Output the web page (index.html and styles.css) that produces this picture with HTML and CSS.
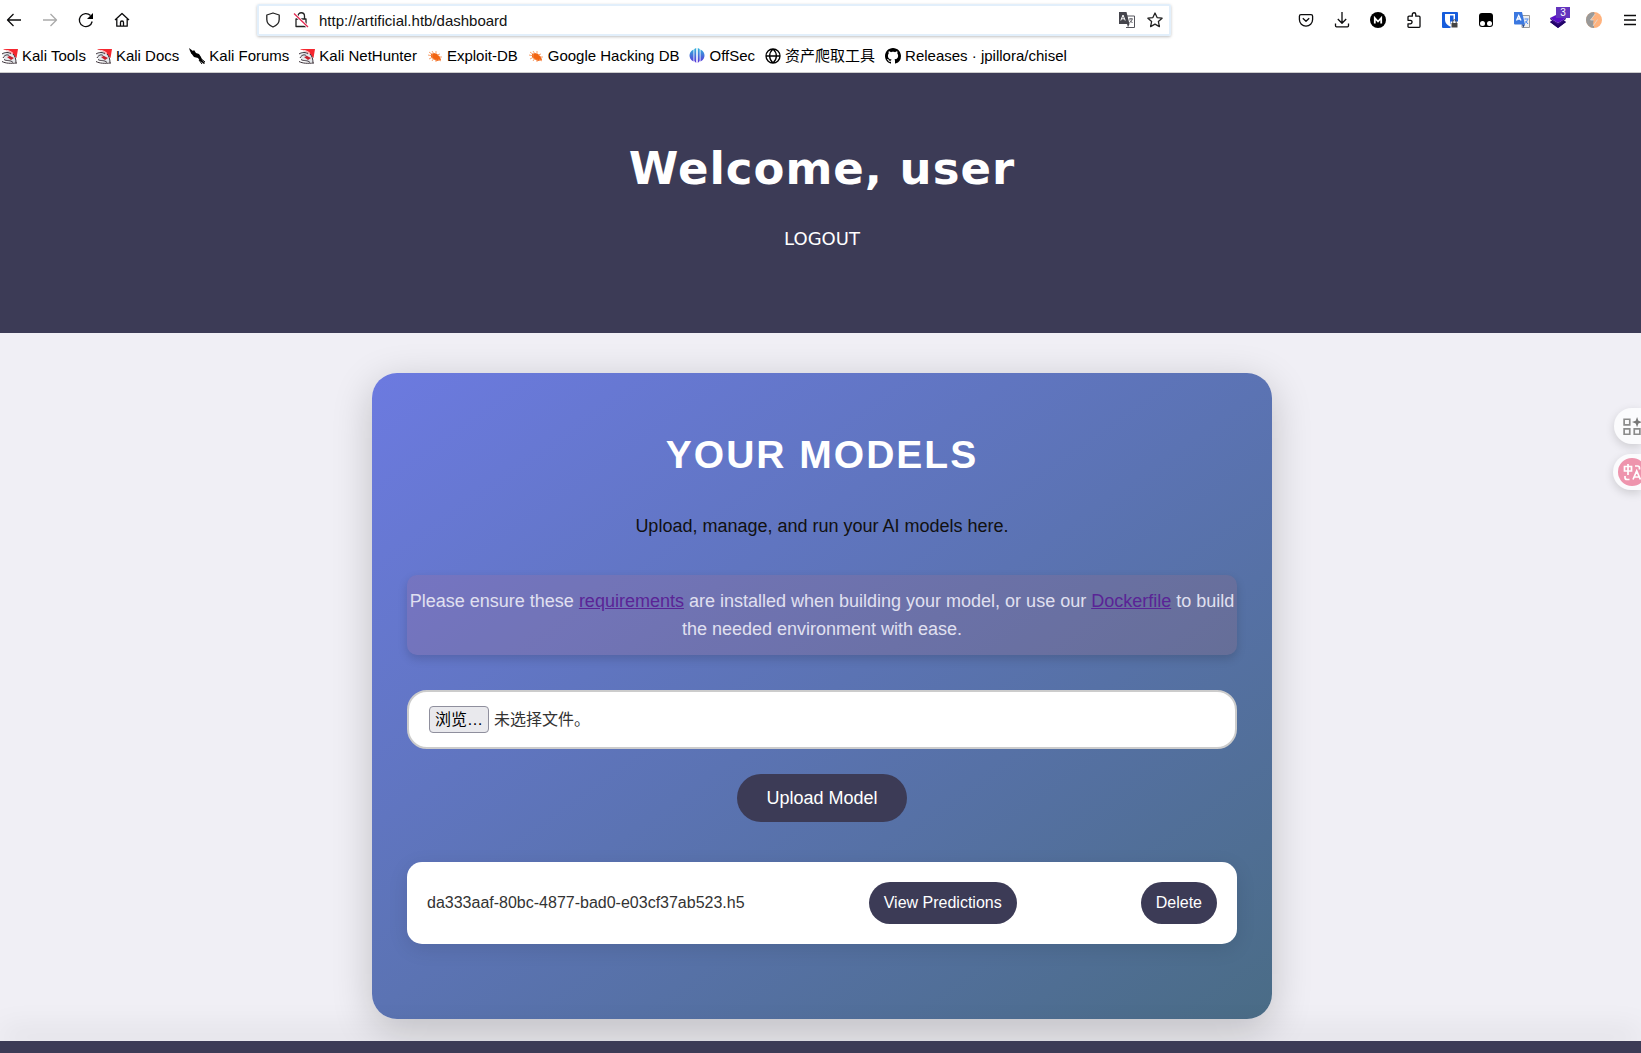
FILE: index.html
```html
<!DOCTYPE html>
<html lang="en">
<head>
<meta charset="utf-8">
<title>Dashboard</title>
<link rel="stylesheet" href="styles.css">
</head>
<body>
<svg class="defs" aria-hidden="true">
  <symbol id="kali" viewBox="0 0 16 16">
    <path d="M1 1h15l-1.500 9-3-3z" fill="#f5272f"/>
    <path d="M1 5l5-2 6 4 2 7-6 0-6-3z" fill="#e4e8ec"/>
    <path d="M0 2.500c4-.5 8 0 11 3" fill="none" stroke="#fff" stroke-width="1"/>
    <path d="M0 6c3-2 7-2 9 0M1 10c2-4 6-4 7-1M2 11.500c3 2 6 0 9 3M0 13.500c4 2 8 2 15 1.500M11 6c2 2 3 5 3 9" fill="none" stroke="#3a3038" stroke-width="1"/>
    <path d="M5 9l3-1 4 2-3 2z" fill="#c5202d"/>
  </symbol>
  <symbol id="spider" viewBox="0 0 16 16">
    <path d="M4 6l3-1 3 1 3 3 1 3-4 1-4-2-2-2z" fill="#f26411"/>
    <path d="M2 4l4 3M5 3l2 3M9 3l0 3M1 7l5 1M2 11l4-2M5 13l2-3M9 14l0-3M13 6l-3 1M15 9l-3 0M14 13l-3-2" fill="none" stroke="#f58a4b" stroke-width=".8"/>
  </symbol>
</svg>

<div class="chrome">
  <div class="toolbar">
    <nav class="nav-group">
      <button class="tool" aria-label="Back"><svg viewBox="0 0 16 16"><path d="M15 8H1.500M7.500 2L1.500 8l6 6" class="ln"/></svg></button>
      <button class="tool faded" aria-label="Forward"><svg viewBox="0 0 16 16"><path d="M1 8h13.500M8.500 2l6 6-6 6" class="ln"/></svg></button>
      <button class="tool" aria-label="Reload"><svg viewBox="0 0 16 16"><path d="M14.200 9.500A6.500 6.500 0 1 1 12.500 3.500" class="ln"/><path d="M15 1v6H9z"/></svg></button>
      <button class="tool" aria-label="Home"><svg viewBox="0 0 16 16"><path d="M1 8l7-6.500L15 8M2.800 7v7.200h10.400V7M6.500 14v-3.500a1.500 1.500 0 0 1 3 0V14" class="ln"/></svg></button>
    </nav>
    <div class="urlbar">
      <svg class="ico" viewBox="0 0 16 16"><path d="M8 1L14.200 3v4.500c0 3-2.500 6-6.200 7.500C4.300 13.500 1.800 10.500 1.800 7.500V3z" class="ln"/></svg>
      <svg class="ico lock" viewBox="0 0 16 16"><path d="M5 7V4a3 3 0 0 1 6.500 0v3M3 7h10v7.500H3z" class="ln"/><path d="M1 1.500L15 15" stroke="#fff" stroke-width="3"/><path d="M1 1.500L15 15" stroke="#e22850" stroke-width="1.300"/></svg>
      <input class="url" type="text" aria-label="Address" value="http://artificial.htb/dashboard">
      <svg class="ico" viewBox="0 0 16 16"><path d="M8 4h7.500v11.500H7" fill="none" stroke="#55555c"/><path d="M0 0h7.500l3 12H0z" fill="#45454c"/><path d="M1.800 8.500L4 3l2.200 5.500M2.700 6.800h2.600" fill="none" stroke="#fff"/><path d="M10 7h4M12 6v1M13 7.500c-.5 2-1.500 2.500-2.500 3M11 8.500l2.500 2.500" fill="none" stroke="#55555c"/><path d="M8 12l2.500 0L9 15.500z" fill="#45454c"/></svg>
      <svg class="ico star" viewBox="0 0 16 16"><path d="M8 1l2.100 4.600 5 .6-3.700 3.400 1 5L8 12.100l-4.400 2.500 1-5L.9 6.200l5-.6z" class="ln"/></svg>
    </div>
    <div class="ext-group">
      <button class="tool" aria-label="Pocket"><svg viewBox="0 0 16 16"><path d="M3 2.700h10a1.600 1.600 0 0 1 1.600 1.600V7.500a6.600 6.600 0 0 1-13.200 0V4.300A1.600 1.600 0 0 1 3 2.700zM4.800 6.300L8 9.300l3.200-3" class="ln"/></svg></button>
      <button class="tool" aria-label="Downloads"><svg viewBox="0 0 16 16"><path d="M8 0v11M3.800 7L8 11.200 12.200 7M1.500 11.500v2.300a1 1 0 0 0 1 1h11a1 1 0 0 0 1-1v-2.300" class="ln"/></svg></button>
      <button class="tool" aria-label="M"><svg viewBox="0 0 16 16"><circle cx="8" cy="8" r="8"/><path d="M4.800 11.500V6L8 9.500 11.200 6v5.500" fill="none" stroke="#fff" stroke-width="1.800"/></svg></button>
      <button class="tool" aria-label="Extensions"><svg viewBox="0 0 16 16"><path d="M2 5.200a1 1 0 0 1 1-1h3.300V2.500a1.700 1.700 0 0 1 3.500 0v1.700h3.200a1 1 0 0 1 1 1v9.300a.8.800 0 0 1-.8.8H2.800a.8.800 0 0 1-.8-.8v-2.700h2.300a1.700 1.700 0 0 0 0-3.500H2z" class="ln"/></svg></button>
      <button class="tool" aria-label="Password manager"><svg viewBox="0 0 16 16"><rect width="16" height="16" rx="1" fill="#175ddc"/><path d="M3 2h10v6c0 3-2 5-5 6.500C5 13 3 11 3 8z" fill="#fff"/><path d="M8 3.500h3.500V8c0 2-1.500 3.500-3.500 4.500z" fill="#175ddc"/><path d="M8.500 9.500H16V16H8.500z" fill="#fff"/><path d="M9.500 11h6v4.500h-6z" fill="#444"/><path d="M10.800 11V9.500a1.700 1.700 0 0 1 3.400 0V11" fill="none" stroke="#444"/></svg></button>
      <button class="tool" aria-label="User scripts"><svg viewBox="0 0 16 16"><path d="M1 4a3 3 0 0 1 3-3h8a3 3 0 0 1 3 3v8a3 3 0 0 1-3 3H4a3 3 0 0 1-3-3z"/><circle cx="4.500" cy="11.600" r="2.500" fill="#fff"/><circle cx="11.500" cy="11.600" r="2.500" fill="#fff"/></svg></button>
      <button class="tool" aria-label="Translate"><svg viewBox="0 0 16 16"><path d="M8 3.500h7.500v12H8z" fill="#eee" stroke="#999"/><path d="M0 0h8l3 12.500H1a1 1 0 0 1-1-1z" fill="#3b78e0"/><path d="M2.500 8.500L4.700 3.500 7 8.500M3.300 7h3" fill="none" stroke="#fff" stroke-width="1.300"/><path d="M8 12.500h3L9.300 15.800z" fill="#204a9c"/><path d="M10.500 7h4M13.500 7.500c-.5 2-1.500 3-2.500 4M11.500 9l2.500 3" fill="none" stroke="#4285f4"/></svg></button>
      <button class="tool" aria-label="Wappalyzer"><svg viewBox="0 0 16 16"><path d="M0 6l8-4 8 4-8 5z" fill="#5a10c8"/><path d="M0 6l8 5 8-5v1l-2 1.500 2 1.500-8 6-8-6 2-1.500L0 7z" fill="#360a86"/><path d="M0 10l2-1 6 4 6-4 2 1-8 6z" fill="#210466"/></svg><span class="badge">3</span></button>
      <button class="tool" aria-label="Proxy"><svg viewBox="0 0 16 16"><circle cx="8" cy="8" r="8" fill="#ffb27d"/><path d="M8 0a8 8 0 0 0 0 16v-4l2-4H6l3-5z" fill="#999"/><path d="M9 2L4.500 8h3L7 14l4.500-6.500h-3z" fill="#ffb27d"/><path d="M9.200 2L4.500 8h3.200M11.500 7.500L7 14" fill="none" stroke="#ddd" stroke-width=".8"/></svg></button>
      <button class="tool" aria-label="Menu"><svg viewBox="0 0 16 16"><path d="M2 3.500h12M2 8h12M2 12.500h12" class="ln"/></svg></button>
    </div>
  </div>
  <nav class="bookmarks">
    <a href="#"><svg><use href="#kali"/></svg>Kali Tools</a>
    <a href="#"><svg><use href="#kali"/></svg>Kali Docs</a>
    <a href="#"><svg viewBox="0 0 16 16"><path d="M0 0l4 3 1-1 2 3 3 1 2 3 1 3 3 3-1 1-4-3-2-3-4-1-3-4-1-2z"/><path d="M10 9l6 5M10 12l3 4M4 5l-2 0" stroke="#000"/></svg>Kali Forums</a>
    <a href="#"><svg><use href="#kali"/></svg>Kali NetHunter</a>
    <a href="#"><svg><use href="#spider"/></svg>Exploit-DB</a>
    <a href="#"><svg><use href="#spider"/></svg>Google Hacking DB</a>
    <a href="#"><svg viewBox="0 0 16 16"><defs><linearGradient id="os" x2="0" y2="1"><stop stop-color="#30b6dc"/><stop offset="1" stop-color="#5a2fd8"/></linearGradient></defs><path d="M4.500 1.500v12C1.500 12 .5 9.500.5 7.500s1-4.500 4-6zM11.500 1.500v12c3-1.500 4-4 4-6s-1-4.500-4-6zM7.200 0v15L5.300 13V1zM8.800 0v15l1.900-2V1z" fill="url(#os)"/></svg>OffSec</a>
    <a href="#"><svg viewBox="0 0 16 16"><path d="M8 1a7 7 0 1 1 0 14A7 7 0 0 1 8 1zM8 1c-4.500 4-4.500 10 0 14M8 1c4.500 4 4.500 10 0 14M1 8h14" class="ln"/></svg>资产爬取工具</a>
    <a href="#"><svg viewBox="0 0 16 16"><path d="M8 0C3.580 0 0 3.580 0 8c0 3.540 2.290 6.530 5.470 7.590.4.070.55-.17.55-.38 0-.19-.01-.82-.01-1.490-2.010.37-2.530-.49-2.690-.94-.09-.23-.48-.94-.82-1.130-.28-.15-.68-.52-.01-.53.63-.01 1.080.58 1.230.82.72 1.210 1.870.87 2.330.66.07-.52.28-.87.51-1.070-1.780-.2-3.640-.89-3.640-3.950 0-.87.31-1.590.82-2.150-.08-.2-.36-1.020.08-2.120 0 0 .67-.21 2.200.82.64-.18 1.320-.27 2-.27s1.360.09 2 .27c1.530-1.040 2.200-.82 2.200-.82.44 1.100.16 1.920.08 2.120.51.56.82 1.270.82 2.150 0 3.070-1.870 3.750-3.650 3.950.29.25.54.73.54 1.480 0 1.070-.01 1.930-.01 2.200 0 .21.15.46.55.38A8.010 8.010 0 0 0 16 8c0-4.420-3.580-8-8-8z"/></svg>Releases · jpillora/chisel</a>
  </nav>
</div>

<header class="hero">
  <h1>Welcome, user</h1>
  <a class="logout" href="#">LOGOUT</a>
</header>

<main>
  <section class="card">
    <h2>YOUR MODELS</h2>
    <p class="lead">Upload, manage, and run your AI models here.</p>
    <p class="notice">Please ensure these <a href="#">requirements</a> are installed when building your model, or use our <a href="#">Dockerfile</a> to build the needed environment with ease.</p>
    <form>
      <label class="file">
        <input type="file">
        <span class="browse">浏览…</span>
        <span>未选择文件。</span>
      </label>
      <button class="btn upload" type="button">Upload Model</button>
    </form>
    <ul class="models">
      <li>
        <span>da333aaf-80bc-4877-bad0-e03cf37ab523.h5</span>
        <a class="btn" href="#">View Predictions</a>
        <button class="btn" type="button">Delete</button>
      </li>
    </ul>
  </section>
</main>
<footer></footer>

<aside class="side">
  <button aria-label="Apps"><svg viewBox="0 0 16 16"><path d="M1 2h5v5H1zM1 10.500h5v5H1zM10 10.500h5v5h-5z" fill="none" stroke="#8b8b8b" stroke-width="1.500"/><path d="M12.500 0l1.200 3.300L17 4.500l-3.300 1.200L12.500 9l-1.200-3.300L8 4.500l3.300-1.200z" fill="#777"/></svg></button>
  <button class="pink" aria-label="Translate page"><svg viewBox="0 0 28 28"><circle cx="14" cy="14" r="14" fill="#ee94ad"/><path d="M6.500 8.500h7v4.500h-7zM10 6v11M17 8h2.500a2 2 0 0 1 2 2v1.500M7 18v1.500a2 2 0 0 0 2 2h2.500M15 21.500l3.700-8.500 3.700 8.500M16.500 19h4.500" fill="none" stroke="#fff" stroke-width="1.700"/></svg></button>
</aside>
</body>
</html>
```
FILE: styles.css
```css
* { box-sizing: border-box; }

body {
  margin: 0;
  min-height: 100vh;
  display: flex;
  flex-direction: column;
  overflow-x: hidden;
  background: #f0eff5;
  font: 18px/28px "Liberation Sans", "Noto Sans CJK SC", sans-serif;
}

h1, h2, p, ul { margin: 0; }
button { border: 0; background: none; padding: 0; font: inherit; }
.defs { position: absolute; width: 0; height: 0; }
.ln { fill: none; stroke: currentColor; stroke-width: 1.3; stroke-linejoin: round; }

/* Browser bars */
.chrome {
  background: #fff;
  border-bottom: 1px solid #ccc;
  color: #0c0c0d;
}

.toolbar {
  height: 40px;
  display: grid;
  grid-template-columns: 257px minmax(0, 914px) 1fr;
  align-items: center;
}

.nav-group, .ext-group { display: flex; gap: 20px; }
.nav-group { padding-left: 6px; }
.ext-group { justify-content: flex-end; padding-right: 3px; }
.tool { position: relative; width: 16px; height: 16px; color: inherit; }
.tool svg { display: block; width: 16px; height: 16px; }
.faded { color: #aaa; }

.badge {
  position: absolute;
  left: 6px;
  top: -5px;
  width: 14px;
  height: 11px;
  background: #6334bd;
  color: #fff;
  font-size: 10px;
  line-height: 11px;
}

.urlbar {
  height: 32px;
  display: flex;
  align-items: center;
  padding: 0 6px;
  border: 2px solid #e2effb;
  border-radius: 2px;
  box-shadow: 0 1px 3px rgba(0, 0, 0, .25);
}

.ico { flex: none; width: 16px; height: 16px; color: #222; }
.lock, .star { margin-left: 12px; }

.url {
  flex: 1;
  min-width: 0;
  padding: 0;
  margin: 0 10px;
  border: 0;
  outline: 0;
  background: none;
  color: #111;
  font: 15px "Liberation Sans", sans-serif;
}

.bookmarks {
  height: 32px;
  display: flex;
  align-items: center;
  gap: 10px;
  padding-left: 2px;
  font-size: 15px;
  white-space: nowrap;
}

.bookmarks a { display: flex; align-items: center; gap: 4px; color: #000; text-decoration: none; }
.bookmarks svg { width: 16px; height: 16px; }

/* Page header */
.hero {
  display: flex;
  flex-direction: column;
  align-items: center;
  gap: 20px;
  padding: 60px 20px 80px 23px;
  background: #3c3b56;
  color: #fff;
  font-family: "DejaVu Sans", sans-serif;
}

h1 { font-size: 45px; line-height: 72px; letter-spacing: 1px; }
.logout { color: #fff; text-decoration: none; }

/* Models */
main { padding: 40px 20px 22px 23px; }

.card {
  max-width: 900px;
  margin: 0 auto;
  padding: 50px 35px 75px;
  border-radius: 25px;
  background: linear-gradient(145deg, #6c7ae0, #4a6c86);
  box-shadow: 0 10px 40px rgba(0, 0, 0, .2);
  text-align: center;
}

h2 { color: #fff; font-size: 39px; line-height: 64px; letter-spacing: 2px; }
.lead { margin: 25px 0 35px; color: #111; }

.notice {
  padding: 12px 0;
  border-radius: 10px;
  background: rgba(255, 99, 71, .1);
  box-shadow: 0 4px 10px rgba(0, 0, 0, .15);
  color: #e0e0f0;
}

.notice a { color: #5a2496; }

.file {
  position: relative;
  display: flex;
  align-items: center;
  gap: 5px;
  height: 59px;
  margin: 35px 0 25px;
  padding: 0 20px;
  border: 2px solid #ccc;
  border-radius: 20px;
  background: #fff;
  color: #333;
  font-size: 16px;
}

.file input { position: absolute; inset: 0; opacity: 0; }

.browse {
  padding: 0 5px;
  border: 1px solid #8f8f9d;
  border-radius: 4px;
  background: #e9e9ed;
  color: #000;
  line-height: 25px;
}

.btn {
  padding: 7px 15px;
  border-radius: 24px;
  background: #3c3b56;
  color: #fff;
  text-decoration: none;
}

.upload { padding: 10px 29px; }

.models {
  margin-top: 40px;
  padding: 0;
  list-style: none;
  font-size: 16px;
}

.models li {
  display: flex;
  justify-content: space-between;
  align-items: center;
  padding: 20px;
  border-radius: 15px;
  background: #fff;
  box-shadow: 0 5px 20px rgba(0, 0, 0, .1);
  color: #333;
}

footer {
  flex: 1;
  min-height: 12px;
  background: #3c3b56;
  box-shadow: 0 -10px 30px rgba(0, 0, 0, .1);
}

/* Floating extension buttons */
.side {
  position: fixed;
  top: 408px;
  right: 0;
  display: flex;
  flex-direction: column;
  align-items: flex-end;
  gap: 10px;
}

.side button {
  width: 27px;
  height: 36px;
  padding-left: 9px;
  overflow: hidden;
  border-radius: 18px 0 0 18px;
  background: #fbfbfd;
  box-shadow: 0 3px 10px rgba(0, 0, 0, .15);
}

.side svg { display: block; width: 18px; height: 18px; }
.side .pink { width: 28px; padding-left: 5px; }
.side .pink svg { width: 28px; height: 28px; }
```
